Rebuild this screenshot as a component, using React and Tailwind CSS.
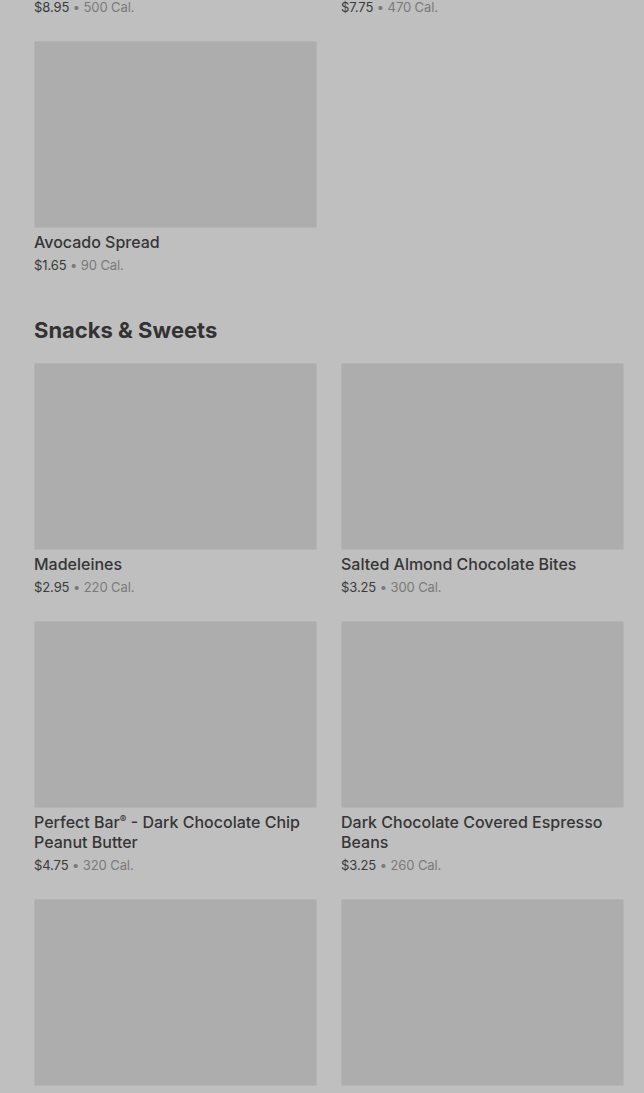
import React from "react";

const font = { fontFamily: "Inter, 'Noto Sans', 'Liberation Sans', sans-serif" };

function Price({ price, cal }) {
  return (
    <div className="mt-[3px] text-[13px] leading-5 tracking-[-0.1px]">
      <span className="text-[#3a3a3a]">{price}</span>
      <span className="text-[#7a7a7a]"> • {cal}</span>
    </div>
  );
}

function Item({ name, price, cal }) {
  return (
    <div className="flex flex-col">
      <div className="h-[187px] w-full rounded-[2px] border border-[#b4b4b4] bg-[#adadad]" />
      <div className="mt-1 text-[16px] font-medium leading-5 text-[#363636]">{name}</div>
      {price && <Price price={price} cal={cal} />}
    </div>
  );
}

export default function App() {
  return (
    <div
      className="h-[1093px] w-full overflow-hidden bg-[#bfbfbf] pl-[34px] pr-[20px]"
      style={font}
    >
      <div className="-mt-[6px] grid grid-cols-[283px_283px] gap-x-6">
        <Price price="$8.95" cal="500 Cal." />
        <Price price="$7.75" cal="470 Cal." />
      </div>
      <div className="mt-6 grid grid-cols-[283px_283px] gap-x-6">
        <Item name="Avocado Spread" price="$1.65" cal="90 Cal." />
      </div>
      <h2 className="mt-[41px] text-[22px] font-bold leading-7 text-[#333333]">
        Snacks &amp; Sweets
      </h2>
      <div className="mt-[19px] grid grid-cols-[283px_283px] gap-x-6 gap-y-6">
        <Item name="Madeleines" price="$2.95" cal="220 Cal." />
        <Item name="Salted Almond Chocolate Bites" price="$3.25" cal="300 Cal." />
        <Item
          name={
            <>
              Perfect Bar<span className="relative -top-[5px] text-[10px] leading-none">®</span> - Dark Chocolate Chip Peanut Butter
            </>
          }
          price="$4.75"
          cal="320 Cal."
        />
        <Item name="Dark Chocolate Covered Espresso Beans" price="$3.25" cal="260 Cal." />
        <Item name="Avocado Madeleine" price="$2.95" cal="200 Cal." />
        <Item name="Chocolate Chip Cookie Bites" price="$3.25" cal="310 Cal." />
      </div>
    </div>
  );
}
